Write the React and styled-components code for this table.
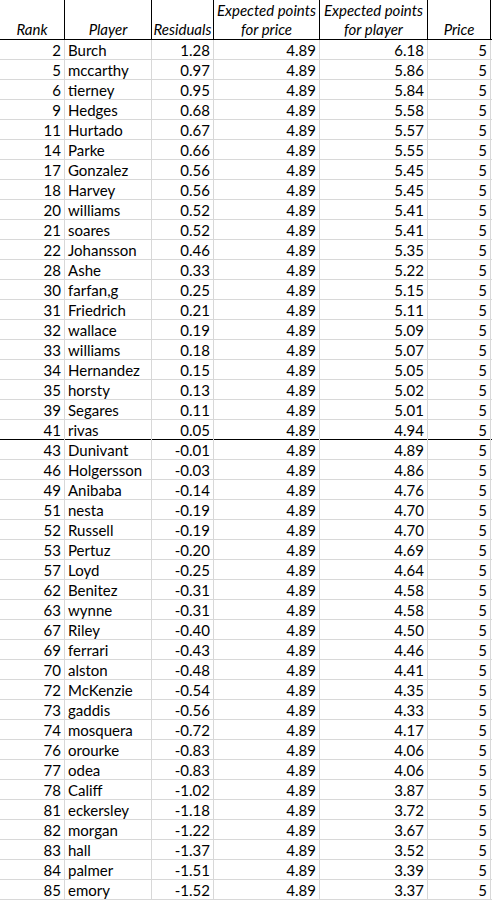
import React from "react";
import styled, { createGlobalStyle } from "styled-components";

const GlobalStyle = createGlobalStyle`
  html, body {
    margin: 0;
    padding: 0;
    background: #fff;
  }
  body {
    font-family: Lato, "Open Sans", "Liberation Sans", sans-serif;
    color: #000;
  }
`;

const COLUMNS = "65px 87px 62px 106px 108px 63px";

const Sheet = styled.div`
  width: 492px;
  display: flex;
  flex-direction: column;
`;

const HeaderRow = styled.div`
  display: grid;
  grid-template-columns: ${COLUMNS};
  height: 40px;
  border-bottom: 1px solid #000;
  box-sizing: border-box;
`;

const HeaderCell = styled.div`
  box-sizing: border-box;
  border-right: 1px solid #000;
  display: flex;
  align-items: flex-end;
  justify-content: center;
  text-align: center;
  font-style: italic;
  font-size: 15px;
  line-height: 19px;
  white-space: pre-line;
`;

const Row = styled.div`
  display: grid;
  grid-template-columns: ${COLUMNS};
  height: 20px;
  box-sizing: border-box;
  border-bottom: 1px solid ${(p) => (p.$divider ? "#000" : "#d8d8d8")};
`;

const Cell = styled.div`
  box-sizing: border-box;
  border-right: 1px solid #d8d8d8;
  font-size: 15px;
  line-height: 20px;
  padding: 0 3px;
  text-align: ${(p) => p.$align || "right"};
  white-space: nowrap;
`;

const headers = [
  "Rank",
  "Player",
  "Residuals",
  "Expected points\nfor price",
  "Expected points\nfor player",
  "Price",
];

const players = [
  [2, "Burch", "1.28", "6.18"],
  [5, "mccarthy", "0.97", "5.86"],
  [6, "tierney", "0.95", "5.84"],
  [9, "Hedges", "0.68", "5.58"],
  [11, "Hurtado", "0.67", "5.57"],
  [14, "Parke", "0.66", "5.55"],
  [17, "Gonzalez", "0.56", "5.45"],
  [18, "Harvey", "0.56", "5.45"],
  [20, "williams", "0.52", "5.41"],
  [21, "soares", "0.52", "5.41"],
  [22, "Johansson", "0.46", "5.35"],
  [28, "Ashe", "0.33", "5.22"],
  [30, "farfan,g", "0.25", "5.15"],
  [31, "Friedrich", "0.21", "5.11"],
  [32, "wallace", "0.19", "5.09"],
  [33, "williams", "0.18", "5.07"],
  [34, "Hernandez", "0.15", "5.05"],
  [35, "horsty", "0.13", "5.02"],
  [39, "Segares", "0.11", "5.01"],
  [41, "rivas", "0.05", "4.94"],
  [43, "Dunivant", "-0.01", "4.89"],
  [46, "Holgersson", "-0.03", "4.86"],
  [49, "Anibaba", "-0.14", "4.76"],
  [51, "nesta", "-0.19", "4.70"],
  [52, "Russell", "-0.19", "4.70"],
  [53, "Pertuz", "-0.20", "4.69"],
  [57, "Loyd", "-0.25", "4.64"],
  [62, "Benitez", "-0.31", "4.58"],
  [63, "wynne", "-0.31", "4.58"],
  [67, "Riley", "-0.40", "4.50"],
  [69, "ferrari", "-0.43", "4.46"],
  [70, "alston", "-0.48", "4.41"],
  [72, "McKenzie", "-0.54", "4.35"],
  [73, "gaddis", "-0.56", "4.33"],
  [74, "mosquera", "-0.72", "4.17"],
  [76, "orourke", "-0.83", "4.06"],
  [77, "odea", "-0.83", "4.06"],
  [78, "Califf", "-1.02", "3.87"],
  [81, "eckersley", "-1.18", "3.72"],
  [82, "morgan", "-1.22", "3.67"],
  [83, "hall", "-1.37", "3.52"],
  [84, "palmer", "-1.51", "3.39"],
  [85, "emory", "-1.52", "3.37"],
];

const App = () => {
  return (
    <>
      <GlobalStyle />
      <Sheet>
        <HeaderRow>
          {headers.map((h) => (
            <HeaderCell key={h}>{h}</HeaderCell>
          ))}
        </HeaderRow>
        {players.map(([rank, name, resid, forPlayer], i) => (
          // black rule between the positive and negative residuals
          <Row key={rank} $divider={i === 19}>
            <Cell>{rank}</Cell>
            <Cell $align="left">{name}</Cell>
            <Cell>{resid}</Cell>
            <Cell>4.89</Cell>
            <Cell>{forPlayer}</Cell>
            <Cell>5</Cell>
          </Row>
        ))}
      </Sheet>
    </>
  );
};

export default App;
